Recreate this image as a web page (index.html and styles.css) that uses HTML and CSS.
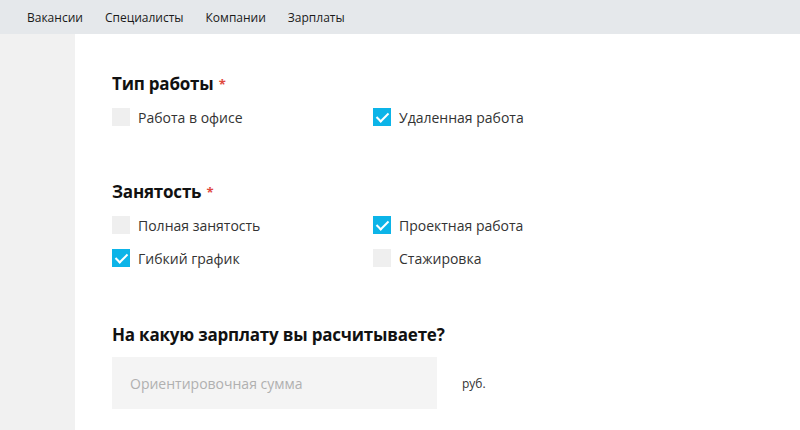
FILE: index.html
```html
<!DOCTYPE html>
<html lang="ru">
<head>
  <meta charset="UTF-8" />
  <meta name="viewport" content="width=device-width, initial-scale=1" />
  <title>Резюме</title>
  <link rel="stylesheet" href="styles.css">
</head>
<body>

  <nav class="topnav">
    <a href="#">Вакансии</a>
    <a href="#">Специалисты</a>
    <a href="#">Компании</a>
    <a href="#">Зарплаты</a>
  </nav>

  <div class="page">
    <aside class="side"></aside>

    <main class="content">
      <!-- Тип работы -->
      <section class="field">
        <h2>Тип работы <span class="req">*</span></h2>
        <div class="options">
          <label class="check"><span class="box"></span>Работа в офисе</label>
          <label class="check"><span class="box checked"></span>Удаленная работа</label>
        </div>
      </section>

      <!-- Занятость -->
      <section class="field">
        <h2>Занятость <span class="req">*</span></h2>
        <div class="options">
          <label class="check"><span class="box"></span>Полная занятость</label>
          <label class="check"><span class="box checked"></span>Проектная работа</label>
          <label class="check"><span class="box checked"></span>Гибкий график</label>
          <label class="check"><span class="box"></span>Стажировка</label>
        </div>
      </section>

      <!-- Зарплата -->
      <section class="field">
        <h2>На какую зарплату вы расчитываете?</h2>
        <div class="salary">
          <input type="text" placeholder="Ориентировочная сумма">
          <span class="unit">руб.</span>
        </div>
      </section>
    </main>
  </div>

</body>
</html>
```

FILE: styles.css
```css
body {
  margin: 0;
  font-family: "Open Sans", Arial, sans-serif;
  color: #333;
  background: #fff;
}

.topnav {
  height: 34px;
  background-color: #e5e8eb;
  display: flex;
  align-items: center;
  gap: 22px;
  padding-left: 27px;
}

.topnav a {
  color: #1a1a1a;
  text-decoration: none;
  font-size: 12px;
}

.page {
  display: flex;
  height: calc(100vh - 34px);
  overflow: hidden;
}

.side {
  width: 75px;
  background-color: #f1f1f1;
}

.content {
  flex: 1;
  padding: 40px 37px 0;
}

.field {
  margin-bottom: 56px;
}

.field:nth-child(2) {
  margin-bottom: 58px;
}

.field h2 {
  margin: 0 0 14px;
  font-size: 17px;
  line-height: 20px;
  font-weight: 700;
  color: #111;
  letter-spacing: -0.2px;
}

.req {
  color: #e0483e;
  font-size: 13px;
  vertical-align: top;
  margin-left: 1px;
}

/* Checkboxes */
.options {
  display: grid;
  grid-template-columns: 261px 261px;
  row-gap: 15px;
}

.check {
  display: flex;
  align-items: center;
  height: 18px;
  font-size: 14px;
  color: #333;
  cursor: pointer;
}

.box {
  width: 18px;
  height: 18px;
  background-color: #efefef;
  margin-right: 8px;
  position: relative;
}

.box.checked {
  background-color: #0cb4e8;
}

.box.checked::after {
  content: "";
  position: absolute;
  left: 6px;
  top: 2px;
  width: 5px;
  height: 10px;
  border: solid #fff;
  border-width: 0 2px 2px 0;
  transform: rotate(45deg);
}

/* Salary */
.salary {
  display: flex;
  align-items: center;
  margin-top: -2px;
}

.salary input {
  width: 325px;
  height: 52px;
  box-sizing: border-box;
  border: none;
  background-color: #f4f4f4;
  padding: 0 18px;
  font-family: inherit;
  font-size: 14px;
  color: #333;
  outline: none;
}

.salary input::placeholder {
  color: #b0b0b0;
}

.unit {
  margin-left: 25px;
  font-size: 12px;
  color: #333;
}
```
